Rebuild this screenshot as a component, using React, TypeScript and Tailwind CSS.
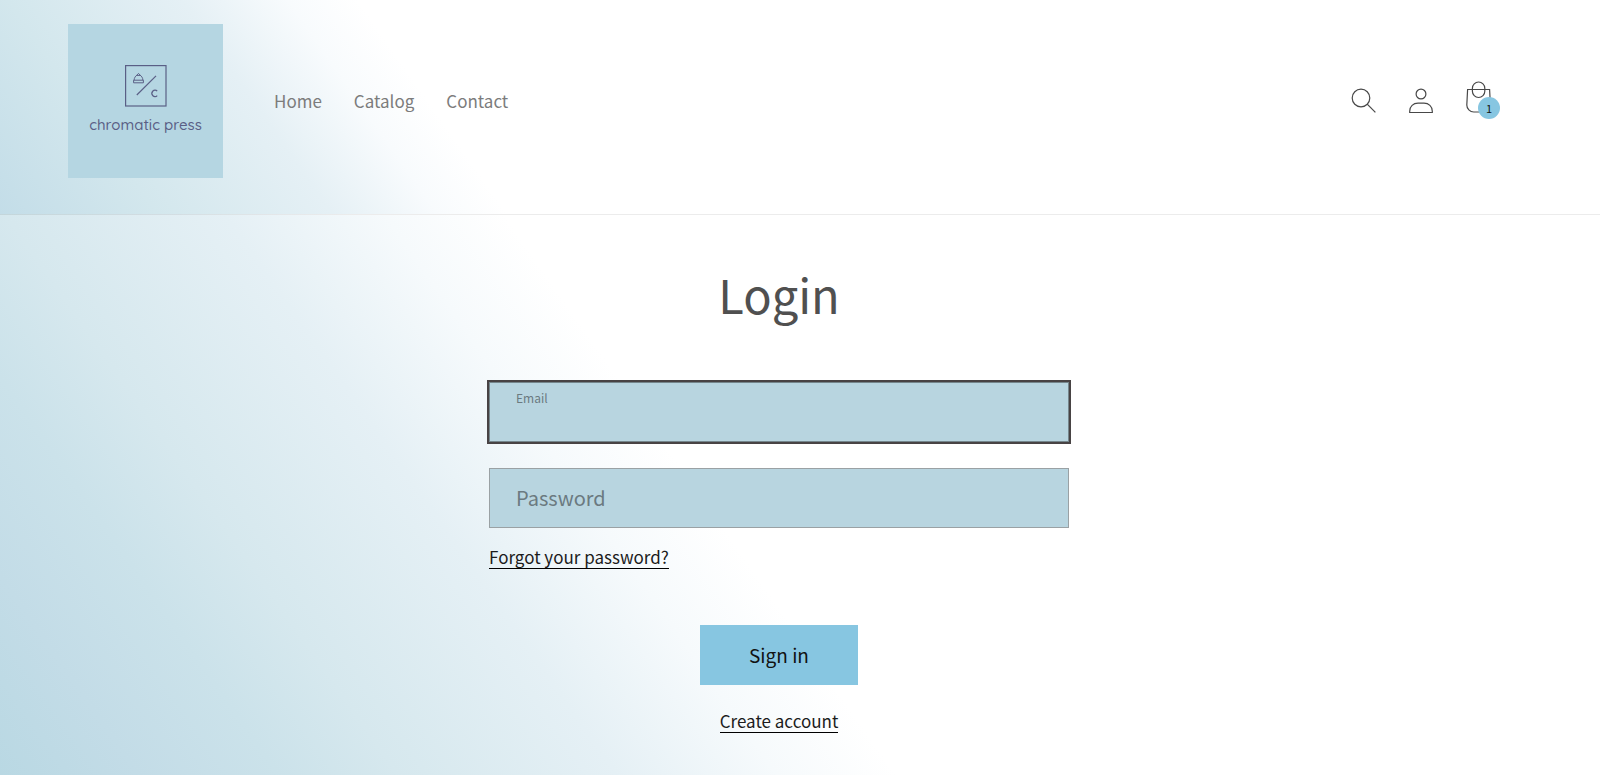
import React, { useState } from 'react';

const navLinks = ['Home', 'Catalog', 'Contact'];

const Logo: React.FC = () => (
  <a href="#" aria-label="chromatic press" className="flex h-[154px] w-[155px] flex-col items-center bg-[#b5d6e2] pt-[41px] text-[#5a5f86]">
    <svg viewBox="0 0 42 42" className="size-[42px]" fill="none" stroke="currentColor" strokeWidth="1">
      <rect x="0.6" y="0.6" width="40.4" height="40.4" strokeWidth="1.2" />
      <path d="M11.800 30 31 10.800" strokeWidth="1.2" />
      <path d="M8.600 17.800h9.800v-2.600H8.600zM9.100 15.200c.2-2.600 1.300-4 2.600-4.800h3.600c1.300.8 2.400 2.200 2.600 4.800M11.200 10.800 13.500 8.400l2.300 2.400" />
      <path d="M32.200 26.200a3 3.300 0 1 0 0 4.400" strokeWidth="1.2" />
    </svg>
    <span className="mt-1.5 font-[Quicksand,Lato,sans-serif] text-[15px] leading-6 font-medium">chromatic press</span>
  </a>
);

const SearchIcon: React.FC = () => (
  <svg viewBox="0 0 26 26" className="size-[26px]" fill="none" stroke="currentColor" strokeWidth="1.2">
    <circle cx="11" cy="10" r="8.800" />
    <path d="m17.200 16.200 8.200 8.200" />
  </svg>
);

const AccountIcon: React.FC = () => (
  <svg viewBox="0 0 26 26" className="size-[26px]" fill="none" stroke="currentColor" strokeWidth="1.2">
    <circle cx="13" cy="6" r="4.900" />
    <path d="M1.700 24.500v-1.300c0-5 3.600-8 8.300-8h6c4.700 0 8.300 3 8.300 8v1.300z" />
  </svg>
);

const CartIcon: React.FC = () => (
  <svg viewBox="0 0 26 32" className="h-8 w-[26px]" fill="none" stroke="currentColor" strokeWidth="1.2">
    <path d="M1.600 8.500h22l.8 15.500a7 7 0 0 1-7 7H7.800a7 7 0 0 1-7-7z" />
    <rect x="6.400" y="1" width="12.400" height="15.500" rx="6.200" />
  </svg>
);

interface FieldProps {
  id: string;
  label: string;
  type: string;
}

const Field: React.FC<FieldProps> = ({ id, label, type }) => {
  const [value, setValue] = useState('');
  const isEmail = type === 'email';

  return (
    <div className="relative">
      <input
        id={id}
        type={type}
        value={value}
        onChange={(e) => setValue(e.target.value)}
        className={`block h-[60px] w-full bg-[#b8d5e0] px-[26px] pt-5 text-lg text-[#484848] outline-none ${
          isEmail ? 'border border-[#75868c] ring-2 ring-[#484344]' : 'border border-[#9aa1a4]'
        }`}
      />
      <label
        htmlFor={id}
        className={`pointer-events-none absolute left-[27px] text-[#6b7a80] ${
          isEmail ? 'top-2 text-xs leading-4' : 'top-4 text-xl leading-7'
        }`}
      >
        {label}
      </label>
    </div>
  );
};

const App: React.FC = () => {
  return (
    <div className="flex min-h-screen flex-col bg-white font-['Noto_Sans_CJK_SC',sans-serif] text-[#1c1c1c]">
      {/* Header */}
      <header className="flex items-center border-b border-[#484848]/10 bg-[linear-gradient(55deg,#c3dde8,#d3e7ed_9%,#e5f0f5_19%,#f8fbfd_25%,#fff_29%)] pt-6 pr-[108px] pb-9 pl-[68px]">
        <Logo />
        <nav className="ml-[51px] flex gap-8 text-[17px] leading-6 text-[#7c7c7c]">
          {navLinks.map((link) => (
            <a key={link} href="#" className="hover:underline">{link}</a>
          ))}
        </nav>
        <div className="ml-auto flex items-center gap-8 text-[#484848]">
          <button aria-label="Search"><SearchIcon /></button>
          <a href="#" aria-label="Log in"><AccountIcon /></a>
          <a href="#" aria-label="Cart" className="relative -top-1">
            <CartIcon />
            <span className="absolute top-4 left-3 flex size-[22px] items-center justify-center rounded-full bg-[#87c6e1] text-[11px] leading-none text-[#121212]">1</span>
          </a>
        </div>
      </header>

      {/* Login form */}
      <main className="flex-1 bg-[linear-gradient(55deg,#b9d8e3,#c3dce7_7%,#cbe2ea_14%,#d6e8ee_20%,#e5f0f5_31%,#f6fafc_39%,#fff_45%)] pr-[42px]">
        <div className="mx-auto flex w-full max-w-[580px] flex-col items-center pt-[45px]">
          <h1 className="text-[47px] leading-[68px] text-[#505050]">Login</h1>
          <form className="mt-[54px] flex w-full flex-col items-center" onSubmit={(e) => e.preventDefault()}>
            <div className="flex w-full flex-col gap-[26px]">
              <Field id="email" label="Email" type="email" />
              <Field id="password" label="Password" type="password" />
            </div>
            <a href="#" className="mt-[18px] self-start border-b border-black text-[17px] leading-[22px]">Forgot your password?</a>
            <button type="submit" className="mt-14 h-[60px] w-[158px] bg-[#87c6e1] text-[19px] text-[#121212]">Sign in</button>
            <a href="#" className="mt-[25px] border-b border-black text-[17px] leading-[22px]">Create account</a>
          </form>
        </div>
      </main>
    </div>
  );
};

export default App;
